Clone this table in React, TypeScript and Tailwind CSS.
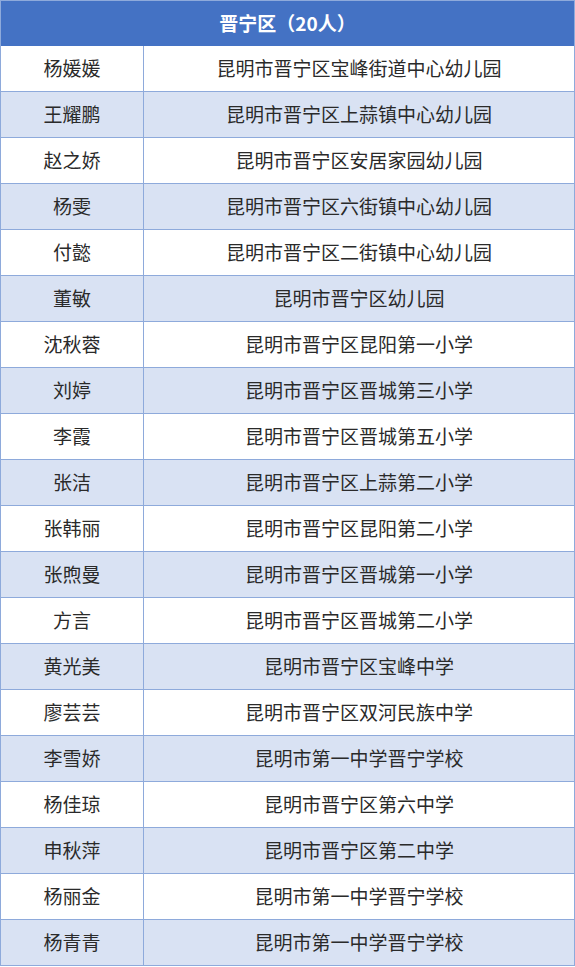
import React from 'react';

const rows = [
  ["杨媛媛", "昆明市晋宁区宝峰街道中心幼儿园"],
  ["王耀鹏", "昆明市晋宁区上蒜镇中心幼儿园"],
  ["赵之娇", "昆明市晋宁区安居家园幼儿园"],
  ["杨雯", "昆明市晋宁区六街镇中心幼儿园"],
  ["付懿", "昆明市晋宁区二街镇中心幼儿园"],
  ["董敏", "昆明市晋宁区幼儿园"],
  ["沈秋蓉", "昆明市晋宁区昆阳第一小学"],
  ["刘婷", "昆明市晋宁区晋城第三小学"],
  ["李霞", "昆明市晋宁区晋城第五小学"],
  ["张洁", "昆明市晋宁区上蒜第二小学"],
  ["张韩丽", "昆明市晋宁区昆阳第二小学"],
  ["张煦曼", "昆明市晋宁区晋城第一小学"],
  ["方言", "昆明市晋宁区晋城第二小学"],
  ["黄光美", "昆明市晋宁区宝峰中学"],
  ["廖芸芸", "昆明市晋宁区双河民族中学"],
  ["李雪娇", "昆明市第一中学晋宁学校"],
  ["杨佳琼", "昆明市晋宁区第六中学"],
  ["申秋萍", "昆明市晋宁区第二中学"],
  ["杨丽金", "昆明市第一中学晋宁学校"],
  ["杨青青", "昆明市第一中学晋宁学校"],
];

const App = () => {
  return (
    <div
      className="w-[575px] text-[19px] text-[#2a2a2a]"
      style={{ fontFamily: '"Noto Sans CJK SC", "Noto Sans", sans-serif' }}
    >
      <div className="h-[46px] bg-[#4472c4] border-t border-x border-[#8eaadb] flex items-center justify-center text-white font-bold">
        晋宁区（20人）
      </div>
      {rows.map(([name, school], i) => (
        <div
          key={i}
          className={`h-[46px] flex border-b border-x border-[#8eaadb] ${i % 2 === 1 ? 'bg-[#d9e2f3]' : 'bg-white'}`}
        >
          <div className="w-[143px] flex items-center justify-center border-r border-[#8eaadb]">
            {name}
          </div>
          <div className="flex-1 flex items-center justify-center">{school}</div>
        </div>
      ))}
    </div>
  );
};

export default App;
